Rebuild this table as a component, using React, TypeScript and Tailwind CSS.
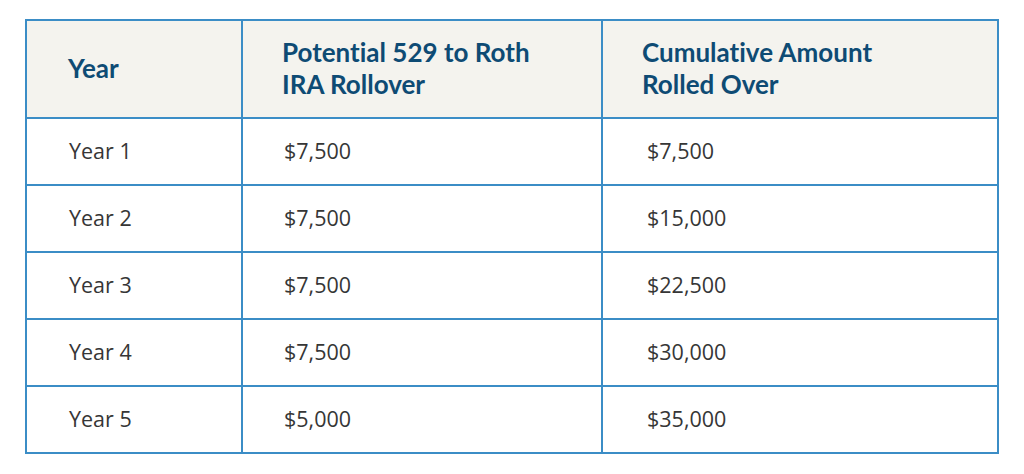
import React from "react";

const rows = [
  ["Year 1", "$7,500", "$7,500"],
  ["Year 2", "$7,500", "$15,000"],
  ["Year 3", "$7,500", "$22,500"],
  ["Year 4", "$7,500", "$30,000"],
  ["Year 5", "$5,000", "$35,000"],
];

export default function App() {
  return (
    <div className="w-[1024px] h-[474px] bg-white pt-[19px] pl-[25px]">
      <div className="w-[974px] border-2 border-[#3b8dc6] box-border">
        <div
          className="flex h-[98px] bg-[#f4f3ee] border-b-2 border-[#3b8dc6] text-[#0e4b74] font-bold text-[26px] leading-[32px] [font-variant-ligatures:none]"
          style={{ fontFamily: "Lato, 'Open Sans', sans-serif" }}
        >
          <div className="w-[216px] border-r-2 border-[#3b8dc6] flex items-center pl-[41px] pb-[3px]">Year</div>
          <div className="w-[360px] border-r-2 border-[#3b8dc6] flex items-center pl-[39px] pb-[3px]">
            <div>
              Potential 529 to Roth
              <br />
              IRA Rollover
            </div>
          </div>
          <div className="flex-1 flex items-center pl-[39px] pb-[3px]">
            <div>
              Cumulative Amount
              <br />
              Rolled Over
            </div>
          </div>
        </div>
        {rows.map((r, i) => (
          <div
            key={i}
            className={`flex text-[#363636] text-[21.5px] ${i < rows.length - 1 ? "h-[67px] border-b-2 border-[#3b8dc6]" : "h-[65px]"}`}
            style={{ fontFamily: "'Open Sans', sans-serif" }}
          >
            <div className="w-[216px] border-r-2 border-[#3b8dc6] flex items-center pl-[42px]">{r[0]}</div>
            <div className="w-[360px] border-r-2 border-[#3b8dc6] flex items-center pl-[41px]">{r[1]}</div>
            <div className="flex-1 flex items-center pl-[44px]">{r[2]}</div>
          </div>
        ))}
      </div>
    </div>
  );
}
